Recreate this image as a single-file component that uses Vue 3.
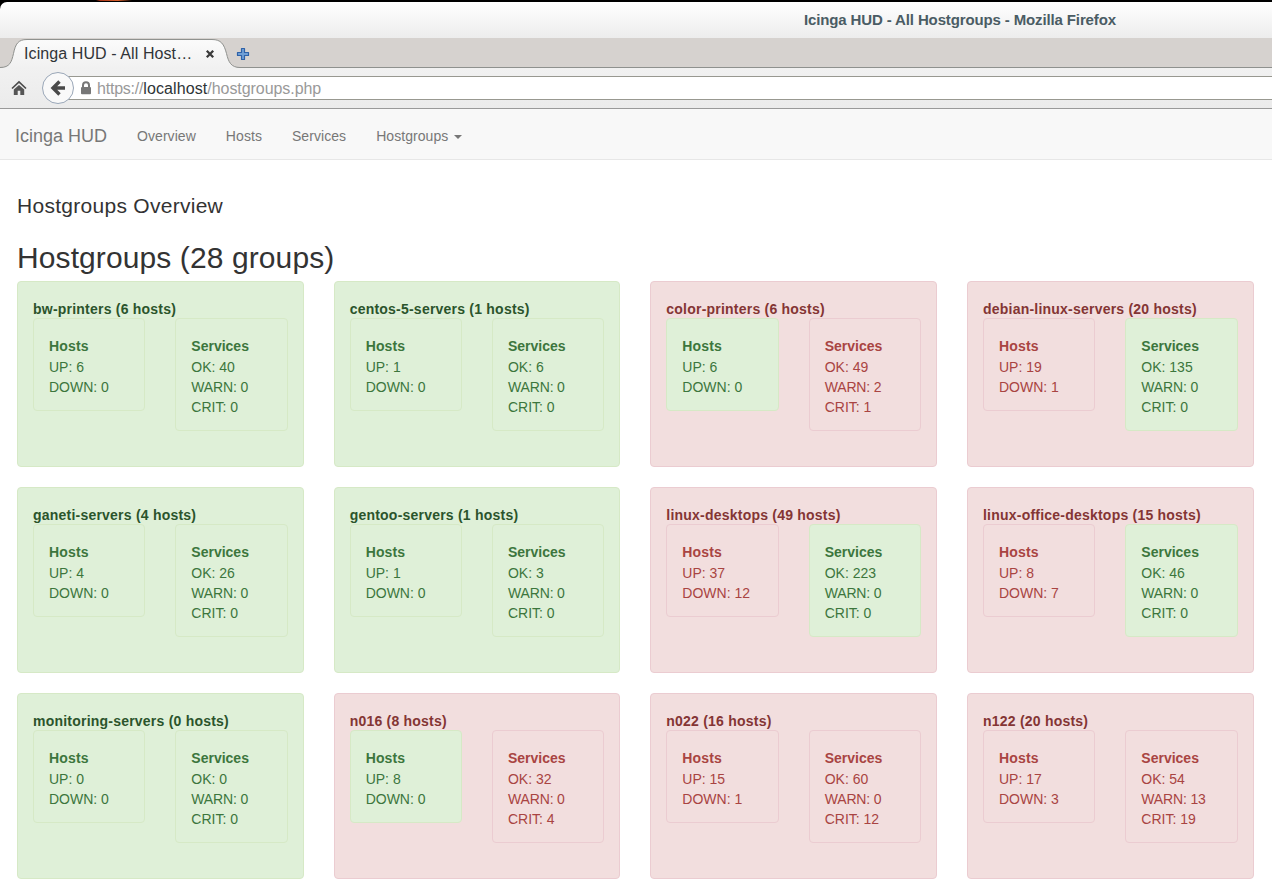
<script setup>
const rows = [
  ['bw-printers', 6, 6, 0, 40, 0, 0],
  ['centos-5-servers', 1, 1, 0, 6, 0, 0],
  ['color-printers', 6, 6, 0, 49, 2, 1],
  ['debian-linux-servers', 20, 19, 1, 135, 0, 0],
  ['ganeti-servers', 4, 4, 0, 26, 0, 0],
  ['gentoo-servers', 1, 1, 0, 3, 0, 0],
  ['linux-desktops', 49, 37, 12, 223, 0, 0],
  ['linux-office-desktops', 15, 8, 7, 46, 0, 0],
  ['monitoring-servers', 0, 0, 0, 0, 0, 0],
  ['n016', 8, 8, 0, 32, 0, 4],
  ['n022', 16, 15, 1, 60, 0, 12],
  ['n122', 20, 17, 3, 54, 13, 19],
]
const groups = rows.map(([name, count, up, down, ok, warn, crit]) => {
  const hostsBad = down > 0
  const servicesBad = warn + crit > 0
  return { name, count, up, down, ok, warn, crit, hostsBad, servicesBad, bad: hostsBad || servicesBad }
})
const state = (bad) => (bad ? 'danger' : 'success')
</script>

<template>
  <div class="window">
    <div class="desktop"><div class="titlebar"><span class="wintitle">Icinga HUD - All Hostgroups - Mozilla Firefox</span></div></div>
    <div class="tabstrip">
      <svg class="tabshape" width="242" height="30" viewBox="0 0 242 30">
        <defs>
          <linearGradient id="tabfill" x1="0" y1="0" x2="0" y2="1">
            <stop offset="0" stop-color="#fbfbfb" /><stop offset="1" stop-color="#f1f1f1" />
          </linearGradient>
        </defs>
        <path d="M0 29.5C10 29.5 11.500 24 13.500 15.500C15.500 6 18 1.500 27 1.500H212C221 1.500 224 6 226.500 15.500C228.500 24 231 29.500 240 29.500V30H0Z" fill="url(#tabfill)" />
        <path d="M0 29.500C10 29.500 11.500 24 13.500 15.500C15.500 6 18 1.500 27 1.500H212C221 1.500 224 6 226.500 15.500C228.500 24 231 29.500 240 29.500H242" fill="none" stroke="#8f918e" />
      </svg>
      <span class="tabtitle">Icinga HUD - All Host…</span>
      <svg class="close" width="10" height="10" viewBox="0 0 10 10"><path d="M1.800 1.800L8.200 8.200M8.200 1.800L1.800 8.200" stroke="#3a3a3a" stroke-width="2.300" /></svg>
      <svg class="plus" width="14" height="14" viewBox="0 0 14 14"><path d="M5.500 1.500h3v4h4v3h-4v4h-3v-4h-4v-3h4z" fill="#6f9fd6" stroke="#2f62a8" stroke-width="1.200" stroke-linejoin="round" /></svg>
    </div>
    <div class="toolbar">
      <svg class="home" width="16" height="16" viewBox="0 0 16 16">
        <path d="M1 8.500L8 2L15 8.500" fill="none" stroke="#4b4b4b" stroke-width="1.700" />
        <path d="M2.800 9.600L8 4.900L13.200 9.600V15H9.300V10.800H6.700V15H2.800Z" fill="#555" />
      </svg>
      <div class="urlbox">
        <svg width="12" height="14" viewBox="0 0 12 14"><path d="M3 6.500V4.200C3 .3 9 .3 9 4.200V6.500" fill="none" stroke="#777" stroke-width="2" /><rect x="1" y="6" width="10" height="7.200" rx="1" fill="#777" /></svg>
        <span class="url"><span class="scheme">https://</span><b>localhost</b>/hostgroups.php</span>
      </div>
      <svg class="back" width="34" height="34" viewBox="0 0 34 34">
        <circle cx="17" cy="17" r="15.500" fill="#f9f9f9" stroke="#9aa7b8" />
        <path d="M18.500 10.500L12 17L18.500 23.500M12.500 17H24" fill="none" stroke="#4a4a4a" stroke-width="3.400" />
      </svg>
    </div>
    <nav class="navbar">
      <span class="brand">Icinga HUD</span>
      <a>Overview</a><a>Hosts</a><a>Services</a><a>Hostgroups <i class="caret"></i></a>
    </nav>
    <main>
      <h4>Hostgroups Overview</h4>
      <h2>Hostgroups (28 groups)</h2>
      <div class="grid">
        <section v-for="g in groups" :key="g.name" class="alert card" :class="state(g.bad)">
          <h3>{{ g.name }} ({{ g.count }} hosts)</h3>
          <div class="pair">
            <div class="alert" :class="state(g.hostsBad)">
              <h3 class="hosts">Hosts</h3>
              <p>UP: {{ g.up }}</p><p>DOWN: {{ g.down }}</p>
            </div>
            <div class="alert" :class="state(g.servicesBad)">
              <h3>Services</h3>
              <p>OK: {{ g.ok }}</p><p class="warn">WARN: {{ g.warn }}</p><p>CRIT: {{ g.crit }}</p>
            </div>
          </div>
        </section>
      </div>
    </main>
  </div>
</template>

<style>
body { margin: 0; background: #fff; }
</style>

<style scoped>
* { box-sizing: border-box; }
.window { width: 1272px; height: 891px; overflow: hidden; font: 14px/20px "Liberation Sans", Arial, sans-serif; color: #333; white-space: nowrap; }
.desktop { height: 38px; padding-top: 2px; background: linear-gradient(90deg, #000 96px, #a83418 100px, #d8602c 118px, #000 132px) 0 0 / 100% 1px no-repeat #000; }
.titlebar { height: 36px; padding-left: 804px; border-radius: 7px 0 0 0; background: linear-gradient(#fff, #ededed); }
.wintitle { font-size: 15px; font-weight: bold; line-height: 36px; letter-spacing: -.13px; color: #4a5c64; }
.tabstrip { position: relative; height: 30px; display: flex; align-items: center; background: #d6d2cf; border-bottom: 1px solid #8f918e; }
.tabshape { position: absolute; left: 0; top: 0; }
.tabtitle { position: relative; width: 181px; margin-left: 24px; padding-top: 2px; font-size: 16px; letter-spacing: .09px; color: #303438; }
.close { position: relative; margin-top: 2px; }
.plus { margin-left: 21px; margin-top: 2px; }
.toolbar { position: relative; height: 41px; display: flex; align-items: center; background: linear-gradient(#f1f1f1, #ebebeb); border-bottom: 1px solid #999; }
.home { margin-left: 11px; }
.urlbox { flex: 1; height: 24px; margin-left: 31px; padding-left: 22px; display: flex; align-items: center; gap: 5px; background: #fff; border: solid #989890; border-width: 1px 0; }
.url { padding-top: 2px; font-size: 16px; color: #999; letter-spacing: -.06px; }
.scheme { letter-spacing: -.22px; }
.url b { font-weight: normal; letter-spacing: .1px; color: #2e3436; }
.back { position: absolute; left: 41px; top: 3px; }
.navbar { height: 51px; padding: 4px 0 0 15px; display: flex; align-items: center; gap: 30px; background: #f8f8f8; border-bottom: 1px solid #e7e7e7; color: #777; letter-spacing: .06px; }
.brand { font-size: 18px; letter-spacing: 0; }
.caret { display: inline-block; margin-left: 2px; vertical-align: middle; border: 4.5px solid transparent; border-top-color: #777; border-bottom: 0; }
main { padding: 0 18.33px 0 17px; }
h4, h2, h3, p { margin: 0; }
h4 { padding-top: 34px; font-size: 21px; line-height: 24px; font-weight: normal; letter-spacing: .28px; }
h2 { margin-top: 22px; height: 41px; font-size: 30px; line-height: 36px; font-weight: normal; letter-spacing: .1px; }
.grid { display: grid; grid-template-columns: repeat(4, 1fr); gap: 20px 30px; }
.alert { padding: 15px; border: 1px solid; border-radius: 4px; }
.card { height: 186px; }
.pair { display: grid; grid-template-columns: 1fr 1fr; gap: 30px; align-items: start; }
h3 { height: 21px; padding-top: 2px; font-size: 14px; line-height: 20px; }
.card > h3 { letter-spacing: .22px; }
.pair .alert { padding-bottom: 13px; }
.pair h3 { height: 23px; }
.hosts { letter-spacing: .15px; }
.warn { letter-spacing: -.15px; }
.success { color: #3c763d; background: #dff0d8; border-color: #d6e9c6; }
.danger { color: #a94442; background: #f2dede; border-color: #ebccd1; }
.card.success > h3 { color: #2b542c; }
.card.danger > h3 { color: #843534; }
</style>
